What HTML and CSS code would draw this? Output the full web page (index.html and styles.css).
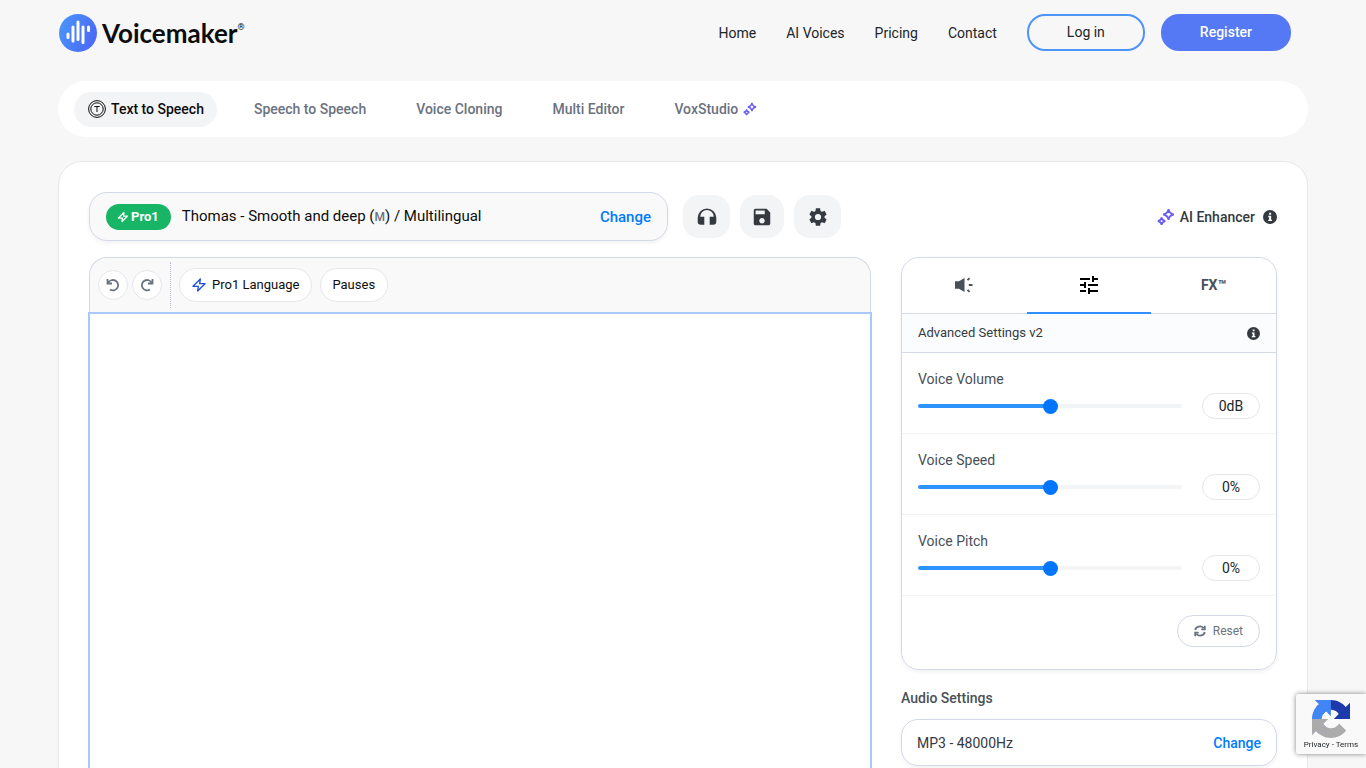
FILE: index.html
```html
<!DOCTYPE html>
<html lang="en">

<head>
    <meta charset="UTF-8">
    <meta name="viewport" content="width=device-width, initial-scale=1.0">
    <title>Voicemaker - Text to Speech</title>
    <link rel="stylesheet" href="styles.css">
</head>

<body>
    <svg class="sprite" aria-hidden="true">
        <symbol id="sparkles" viewBox="0 0 18 18">
            <path d="M11.500 1.200C12 4.600 13.200 5.900 16.800 6.500C13.200 7.100 12 8.400 11.500 11.800C11 8.400 9.800 7.100 6.200 6.500C9.800 5.900 11 4.600 11.500 1.200Z" />
            <path d="M4.600 9.400C4.900 11.800 5.900 12.800 8.300 13.200C5.900 13.600 4.900 14.600 4.600 17C4.300 14.600 3.300 13.600 0.900 13.200C3.300 12.800 4.300 11.800 4.600 9.400Z" />
        </symbol>
        <symbol id="bolt" viewBox="0 0 24 24">
            <path d="M14 3L3 14h8l-1 7L21 10h-8z" />
        </symbol>
        <symbol id="info" viewBox="0 0 16 16">
            <circle cx="8" cy="8" r="8" fill="#343a40" />
            <path d="M7 3h2.300v2.300H7zM6 6.700h3.300v4.300H10.300v1.600H5.900V11H7V8.200H6z" fill="#fff" />
        </symbol>
    </svg>

    <header>
        <a href="#" class="logo">
            <svg class="logo-mark" viewBox="0 0 38 38">
                <defs>
                    <linearGradient id="logo-fill" x1="0" y1="0" x2="1" y2="0.400">
                        <stop offset="0" stop-color="#4a98fb" />
                        <stop offset="1" stop-color="#4b6cf6" />
                    </linearGradient>
                </defs>
                <circle cx="19" cy="19" r="19" fill="url(#logo-fill)" />
                <path d="M9 20v3.500M14 13v14M19 8v17.500M24 13v15.500M29.500 13v3.500" stroke="#fff" stroke-width="3" stroke-linecap="round" />
            </svg>
            <span class="logo-text">Voicemaker</span><sup>®</sup>
        </a>
        <nav>
            <a href="#">Home</a>
            <a href="#">AI Voices</a>
            <a href="#">Pricing</a>
            <a href="#">Contact</a>
            <div class="account">
                <a href="#" class="login">Log in</a>
                <a href="#" class="register">Register</a>
            </div>
        </nav>
    </header>

    <div class="product-tabs">
        <a href="#" class="product-tab active">
            <svg class="tts-icon" viewBox="0 0 18 18">
                <circle cx="9" cy="9" r="8.400" />
                <circle cx="9" cy="9" r="6.200" />
                <path d="M6.300 6.500h5.400M9 6.500v5.500" />
            </svg>
            Text to Speech
        </a>
        <a href="#" class="product-tab">Speech to Speech</a>
        <a href="#" class="product-tab">Voice Cloning</a>
        <a href="#" class="product-tab">Multi Editor</a>
        <a href="#" class="product-tab">VoxStudio <svg class="sparkle sparkle-small"><use href="#sparkles" /></svg></a>
    </div>

    <main>
        <div class="voice-row">
            <div class="voice-box">
                <span class="badge"><svg class="bolt-small"><use href="#bolt" /></svg>Pro1</span>
                <span class="voice-name">Thomas - Smooth and deep (<span class="gender">M</span>) / Multilingual</span>
                <button class="change-btn">Change</button>
            </div>
            <div class="voice-actions">
                <button class="action-btn" aria-label="Listen">
                    <svg class="icon-md" viewBox="0 0 22 22"><path d="M11 2.500a9.300 9.300 0 0 0-9.300 9.300v3.700a3.200 3.200 0 0 0 3.200 3.200H8.300v-8H4.200a6.800 6.800 0 0 1 13.600 0H13.700v8h3.400a3.200 3.200 0 0 0 3.200-3.200v-3.700A9.300 9.300 0 0 0 11 2.500z" /></svg>
                </button>
                <button class="action-btn action-save" aria-label="Save">
                    <svg class="icon-md" viewBox="0 0 24 24"><path d="M17 3H5a2 2 0 0 0-2 2v14c0 1.100.900 2 2 2h14c1.100 0 2-.900 2-2V7l-4-4zm-5 16c-1.660 0-3-1.340-3-3s1.340-3 3-3 3 1.340 3 3-1.340 3-3 3zm3-10H5V5h10v4z" /></svg>
                </button>
                <button class="action-btn" aria-label="Settings">
                    <svg class="icon-md" viewBox="0 0 24 24"><path d="M19.140 12.940c.04-.3.06-.61.06-.94 0-.32-.02-.64-.07-.94l2.030-1.580a.49.49 0 0 0 .12-.61l-1.920-3.320a.488.488 0 0 0-.59-.22l-2.390.96c-.5-.38-1.030-.7-1.620-.94l-.36-2.540a.484.484 0 0 0-.48-.41h-3.840c-.24 0-.43.17-.47.41l-.36 2.540c-.59.24-1.130.57-1.620.94l-2.390-.96c-.22-.08-.47 0-.59.22L2.740 8.870c-.12.21-.08.47.12.61l2.030 1.580c-.05.3-.09.63-.09.94s.02.64.07.94l-2.030 1.580a.49.49 0 0 0-.12.61l1.920 3.320c.12.22.37.29.59.22l2.390-.96c.5.38 1.030.7 1.620.94l.36 2.540c.05.24.24.41.48.41h3.840c.24 0 .44-.17.47-.41l.36-2.540c.59-.24 1.130-.56 1.620-.94l2.390.96c.22.08.47 0 .59-.22l1.920-3.320c.12-.22.07-.47-.12-.61l-2.010-1.580zM12 15.400a3.400 3.400 0 1 1 0-6.800 3.400 3.400 0 0 1 0 6.800z" /></svg>
                </button>
            </div>
            <div class="enhancer">
                <svg class="sparkle"><use href="#sparkles" /></svg>
                <span>AI Enhancer</span>
                <svg class="info"><use href="#info" /></svg>
            </div>
        </div>

        <div class="workspace">
            <section class="editor">
                <div class="toolbar">
                    <button class="round-btn" aria-label="Undo">
                        <svg viewBox="0 0 14 14"><path d="M1.500 1v4.500H6M2.200 5A5.200 5.200 0 1 1 4 11.500" /></svg>
                    </button>
                    <button class="round-btn" aria-label="Redo">
                        <svg viewBox="0 0 14 14"><path d="M12.500 1v4.500H8M11.800 5A5.200 5.200 0 1 0 10 11.500" /></svg>
                    </button>
                    <span class="divider"></span>
                    <button class="pill-btn"><svg class="bolt"><use href="#bolt" /></svg>Pro1 Language</button>
                    <button class="pill-btn">Pauses</button>
                </div>
                <textarea aria-label="Text to convert"></textarea>
            </section>

            <aside>
                <div class="settings">
                    <div class="settings-tabs">
                        <button aria-label="Voice effects">
                            <svg class="speaker" viewBox="0 0 18 18">
                                <path d="M0 5.200h4L9.500 2v14L4 12.800H0z" fill="#495057" />
                                <path d="M12.500 4.200l2-2M13.800 9H17.500M12.500 13.800l2 2" stroke="#495057" stroke-width="1.800" fill="none" />
                            </svg>
                        </button>
                        <button class="active" aria-label="Advanced settings">
                            <svg class="icon-lg" viewBox="0 0 24 24"><path d="M3 17v2h6v-2H3zM3 5v2h10V5H3zm10 16v-2h8v-2h-8v-2h-2v6h2zM7 9v2H3v2h4v2h2V9H7zm14 4v-2H11v2h10zm-6-4h2V7h4V5h-4V3h-2v6z" /></svg>
                        </button>
                        <button>FX™</button>
                    </div>
                    <div class="settings-title">
                        <span>Advanced Settings v2</span>
                        <svg class="info info-small"><use href="#info" /></svg>
                    </div>
                    <div class="setting">
                        <label for="volume">Voice Volume</label>
                        <div class="setting-control">
                            <input type="range" id="volume" min="-20" max="20" value="0">
                            <input type="text" class="value" aria-label="Voice volume value" value="0dB">
                        </div>
                    </div>
                    <div class="setting">
                        <label for="speed">Voice Speed</label>
                        <div class="setting-control">
                            <input type="range" id="speed" min="-100" max="100" value="0">
                            <input type="text" class="value" aria-label="Voice speed value" value="0%">
                        </div>
                    </div>
                    <div class="setting">
                        <label for="pitch">Voice Pitch</label>
                        <div class="setting-control">
                            <input type="range" id="pitch" min="-100" max="100" value="0">
                            <input type="text" class="value" aria-label="Voice pitch value" value="0%">
                        </div>
                    </div>
                    <div class="settings-footer">
                        <button class="reset-btn">
                            <svg viewBox="0 0 12 12"><path d="M1.200 5A4.800 4.300 0 0 1 9.600 3M10.800 .8v3.500H7.300M10.800 7A4.800 4.300 0 0 1 2.400 9M1.200 11.200V7.700h3.500" /></svg>
                            Reset
                        </button>
                    </div>
                </div>

                <h2>Audio Settings</h2>
                <div class="audio-box">
                    <span>MP3 - 48000Hz</span>
                    <button class="change-btn change-light">Change</button>
                </div>
            </aside>
        </div>
    </main>

    <div class="recaptcha">
        <svg viewBox="0 0 64 64">
            <path fill="#1c3aa9" d="M64 31.955l-.033-1.370V4.687l-7.160 7.160C50.948 4.674 42.033.093 32.050.093c-10.400 0-19.622 4.960-25.458 12.640l11.736 11.860a15.550 15.550 0 0 1 4.754-5.334c2.050-1.600 4.952-2.906 8.968-2.906.485 0 .86.057 1.135.163 4.976.393 9.288 3.140 11.828 7.124l-8.307 8.307L64 31.953" />
            <path fill="#4285f4" d="M31.862.094l-1.370.033H4.594l7.160 7.160C4.580 13.147 0 22.060 0 32.046c0 10.400 4.960 19.622 12.640 25.458L24.500 45.768a15.550 15.550 0 0 1-5.334-4.754c-1.600-2.050-2.906-4.952-2.906-8.968 0-.485.057-.86.163-1.135.393-4.976 3.140-9.288 7.124-11.828l8.307 8.307L31.860.095" />
            <path fill="#ababab" d="M.001 32.045l.033 1.370v25.898l7.160-7.160c5.860 7.173 14.774 11.754 24.760 11.754 10.400 0 19.622-4.960 25.458-12.640l-11.736-11.860a15.550 15.550 0 0 1-4.754 5.334c-2.050 1.600-4.952 2.906-8.968 2.906-.485 0-.86-.057-1.135-.163-4.976-.393-9.288-3.140-11.828-7.124l8.307-8.307c-10.522.04-22.400.066-27.295-.005" />
        </svg>
        <p><a href="#">Privacy</a> - <a href="#">Terms</a></p>
    </div>
</body>

</html>
```

FILE: styles.css
```css
* {
    margin: 0;
    padding: 0;
    box-sizing: border-box;
    text-decoration: none;
}

body {
    background-color: #f7f7f7;
    font-family: Roboto, 'Liberation Sans', sans-serif;
    font-size: 14px;
    line-height: 20px;
    color: #212529;
}

button,
input,
textarea {
    font: inherit;
    color: inherit;
    border: none;
    background: none;
}

button {
    cursor: pointer;
}

a {
    color: inherit;
}

svg {
    display: block;
    flex-shrink: 0;
}

.sprite {
    position: absolute;
    width: 0;
    height: 0;
}

header,
.product-tabs,
main {
    width: calc(100% - 32px);
    max-width: 1250px;
    margin: 0 auto;
}

/* header */
header {
    display: flex;
    justify-content: space-between;
    align-items: center;
    height: 65px;
    padding-right: 17px;
}

.logo {
    display: flex;
    align-items: center;
    color: #0d0d0d;
}

.logo-mark {
    width: 38px;
    height: 38px;
    margin: 0 5px 0 1px;
}

.logo-text {
    font-family: Lato, sans-serif;
    font-weight: 700;
    font-size: 26px;
}

.logo sup {
    font-size: 9px;
    align-self: flex-start;
    line-height: 26px;
}

nav {
    display: flex;
    align-items: center;
    gap: 30px;
    font-size: 14px;
}

.account {
    display: flex;
    gap: 16px;
}

.login,
.register {
    height: 37px;
    line-height: 37px;
    padding: 0 39px;
    border-radius: 18px;
}

.login {
    line-height: 33px;
    padding: 0 38px;
    border: 2px solid #4d94f8;
}

.register {
    background-color: #5578f4;
    color: #fff;
    font-weight: 500;
}

/* product tabs */
.product-tabs {
    display: flex;
    align-items: center;
    gap: 24px;
    height: 56px;
    margin-top: 16px;
    padding: 0 16px;
    border-radius: 28px;
    background-color: #fff;
}

.product-tab {
    display: flex;
    align-items: center;
    gap: 5px;
    height: 35px;
    padding: 0 13px;
    border-radius: 18px;
    font-weight: 500;
    color: #6b7280;
}

.product-tab.active {
    padding-left: 14px;
    background-color: #f3f4f6;
    color: #0d0d0d;
}

.tts-icon {
    width: 18px;
    height: 18px;
    fill: none;
    stroke: #0d0d0d;
}

.sparkle {
    width: 18px;
    height: 18px;
    fill: none;
    stroke: #6b5cf6;
    stroke-width: 1.8;
}

.sparkle-small {
    width: 14px;
    height: 14px;
}

/* main card */
main {
    margin-top: 24px;
    padding: 30px;
    border: 1px solid #e5e7eb;
    border-radius: 24px;
    background-color: #fff;
}

.voice-row {
    display: flex;
    align-items: center;
}

.voice-box {
    display: flex;
    align-items: center;
    flex: 0 1 579px;
    height: 49px;
    padding: 0 16px;
    border: 1px solid #d3d9e6;
    border-radius: 18px;
    background-color: #f9f9f9;
    box-shadow: 0 2px 4px rgba(0, 0, 0, 0.06);
}

.badge {
    display: flex;
    align-items: center;
    gap: 2px;
    height: 26px;
    padding: 0 12px 0 11px;
    border-radius: 13px;
    background-color: #18b566;
    color: #fff;
    font-size: 13px;
    font-weight: 700;
}

.bolt-small,
.bolt {
    width: 12px;
    height: 12px;
    fill: none;
    stroke: #fff;
    stroke-width: 2.5;
    stroke-linejoin: round;
}

.bolt {
    width: 16px;
    height: 16px;
    stroke: #1d4ed8;
    stroke-width: 2;
}

.voice-name {
    margin-left: 11px;
    font-size: 15px;
    color: #0d0d0d;
}

.gender {
    font-size: 12px;
    font-weight: 500;
    color: #6b7280;
}

.change-btn {
    margin-left: auto;
    font-size: 15px;
    font-weight: 500;
    color: #007bff;
}

.change-light {
    font-size: 14px;
}

.voice-actions {
    display: flex;
    gap: 10px;
    margin-left: 15px;
}

.action-btn {
    display: flex;
    align-items: center;
    justify-content: center;
    width: 47px;
    height: 43px;
    border-radius: 16px;
    background-color: #f3f4f6;
    fill: #343a40;
}

.action-save {
    width: 44px;
}

.icon-lg {
    width: 24px;
    height: 24px;
}

.icon-md {
    width: 22px;
    height: 22px;
}

.enhancer {
    display: flex;
    align-items: center;
    gap: 5px;
    height: 21px;
    margin-left: auto;
    font-weight: 500;
    color: #343a40;
}

.info {
    width: 14px;
    height: 14px;
    margin-left: 3px;
}

.info-small {
    width: 13px;
    height: 13px;
}

.workspace {
    display: grid;
    grid-template-columns: 1fr 376px;
    gap: 30px;
    margin-top: 16px;
}

/* editor */
.editor {
    display: flex;
    flex-direction: column;
}

.toolbar {
    display: flex;
    align-items: center;
    gap: 8px;
    height: 56px;
    padding: 0 8px 1px;
    border: 1px solid #d3d9e6;
    border-bottom: none;
    border-radius: 18px 18px 0 0;
    background-color: #f9f9f9;
}

.round-btn {
    display: flex;
    align-items: center;
    justify-content: center;
    width: 30px;
    height: 30px;
    border: 1px solid #e5e7eb;
    border-radius: 50%;
    background-color: #fff;
}

.round-btn + .round-btn {
    margin-left: -4px;
}

.round-btn svg,
.reset-btn svg {
    width: 14px;
    height: 14px;
    fill: none;
    stroke: #6b7280;
    stroke-width: 1.8;
}

.divider {
    height: 46px;
    border-left: 1px dotted #b9bfcc;
}

.pill-btn {
    display: flex;
    align-items: center;
    gap: 5px;
    height: 34px;
    padding: 0 12px 0 11px;
    border: 1px solid #e5e7eb;
    border-radius: 17px;
    background-color: #fff;
    font-size: 13px;
    color: #0d0d0d;
}

textarea {
    flex: 1;
    min-height: 520px;
    padding: 16px;
    border: 1px solid #a8c9fb;
    background-color: #fff;
    box-shadow: 0 0 0 1px #a8c9fb;
    resize: none;
    outline: none;
}

/* settings */
.settings {
    border: 1px solid #d3d9e6;
    border-radius: 18px;
    overflow: hidden;
    box-shadow: 0 2px 4px rgba(0, 0, 0, 0.06);
}

.settings-tabs {
    display: grid;
    grid-template-columns: repeat(3, 1fr);
    height: 56px;
    border-bottom: 1px solid #d3d9e6;
}

.settings-tabs button {
    display: flex;
    align-items: center;
    justify-content: center;
    height: 56px;
    border-bottom: 2px solid transparent;
    font-weight: 700;
    color: #495057;
}

.settings-tabs button.active {
    border-bottom-color: #2e8fff;
}

.speaker {
    width: 18px;
    height: 18px;
}

.settings-title {
    display: flex;
    align-items: center;
    justify-content: space-between;
    height: 39px;
    padding: 0 16px;
    border-bottom: 1px solid #d3d9e6;
    background-color: #fbfcfe;
    font-size: 13px;
    color: #343a40;
}

.setting {
    height: 81px;
    padding: 16px 16px 0;
    border-bottom: 1px solid #f1f3f5;
}

.setting label {
    display: block;
    color: #495057;
}

.setting-control {
    display: flex;
    align-items: center;
    gap: 20px;
    margin-top: 4px;
}

input[type="range"] {
    flex: 1;
    min-width: 0;
    height: 4px;
    border-radius: 2px;
    background: linear-gradient(to right, #2e93ff 50%, #f3f4f6 50%);
    -webkit-appearance: none;
    appearance: none;
}

input[type="range"]::-webkit-slider-thumb {
    -webkit-appearance: none;
    width: 15px;
    height: 15px;
    border-radius: 50%;
    background-color: #0075ff;
}

.value {
    width: 58px;
    height: 26px;
    border: 1px solid #e5e7eb;
    border-radius: 13px;
    text-align: center;
}

.settings-footer {
    display: flex;
    justify-content: flex-end;
    padding: 19px 16px 22px;
}

.reset-btn {
    display: flex;
    align-items: center;
    gap: 7px;
    height: 32px;
    padding: 0 16px;
    border: 1px solid #d3d9e6;
    border-radius: 16px;
    font-size: 12px;
    color: #6b7280;
}

.reset-btn svg {
    width: 12px;
    height: 12px;
    stroke-width: 1.8;
}

aside h2 {
    margin: 18px 0 11px;
    font-size: 14px;
    font-weight: 500;
    color: #495057;
}

.audio-box {
    display: flex;
    align-items: center;
    height: 47px;
    padding: 0 15px;
    border: 1px solid #d3d9e6;
    border-radius: 17px;
    color: #343a40;
    box-shadow: 0 2px 4px rgba(0, 0, 0, 0.06);
}

/* recaptcha badge stays over the page corner */
.recaptcha {
    position: fixed;
    right: 0;
    bottom: 14px;
    width: 70px;
    height: 60px;
    padding-top: 6px;
    border-radius: 2px 0 0 2px;
    background-color: #f9f9f9;
    box-shadow: 0 0 5px gray;
}

.recaptcha svg {
    width: 38px;
    height: 38px;
    margin: 0 auto;
}

.recaptcha p {
    font-size: 8px;
    line-height: 14px;
    text-align: center;
    white-space: nowrap;
}
```
